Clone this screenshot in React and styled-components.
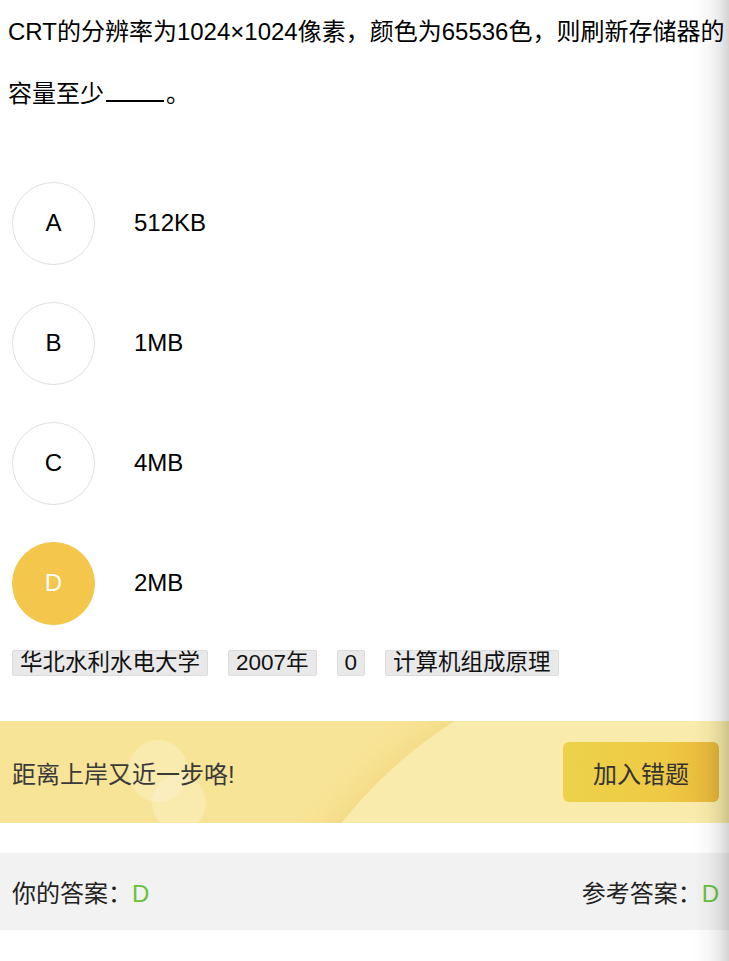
import React from "react";
import styled, { createGlobalStyle } from "styled-components";

const Global = createGlobalStyle`
  html, body { margin: 0; padding: 0; background: #fff; }
  body {
    font-family: "Liberation Sans", Arial, "Noto Sans CJK SC", sans-serif;
    color: #000;
  }
  * { box-sizing: border-box; }
`;

const Page = styled.div`
  position: relative;
  width: 729px;
  min-height: 961px;
  overflow: hidden;
`;

const Question = styled.p`
  margin: 0;
  padding: 1px 0 0 8px;
  font-size: 24px;
  line-height: 62px;
  color: #000;
`;

const Blank = styled.span`
  display: inline-block;
  width: 58px;
  height: 18px;
  border-bottom: 2px solid #000;
  vertical-align: 0px;
  margin: 0 2px 0 2px;
`;

const OptionList = styled.div`
  margin-top: 38px;
  display: flex;
  flex-direction: column;
`;

const OptionRow = styled.div`
  height: 120px;
  display: flex;
  align-items: center;
  padding-left: 12px;
  gap: 39px;
`;

const Circle = styled.div`
  width: 83px;
  height: 83px;
  border-radius: 50%;
  display: flex;
  align-items: center;
  justify-content: center;
  font-size: 24px;
  border: 1px solid ${(p) => (p.$active ? "#F4C64B" : "#e0e0e0")};
  background: ${(p) => (p.$active ? "#F4C64B" : "#fff")};
  color: ${(p) => (p.$active ? "#fff" : "#000")};
`;

const OptionText = styled.span`
  font-size: 24px;
  color: #000;
`;

const Tags = styled.div`
  margin-top: 7px;
  height: 26px;
  padding-left: 12px;
  display: flex;
  align-items: flex-start;
  gap: 20px;
`;

const Tag = styled.span`
  height: 26px;
  padding: 0 7px;
  display: inline-flex;
  align-items: center;
  font-size: 22.5px;
  line-height: 24px;
  color: #111;
  background: #e9e9e9;
  border: 1px solid #dcdcdc;
  border-radius: 2px;
`;

const Banner = styled.div`
  position: relative;
  margin-top: 45px;
  height: 102px;
  display: flex;
  align-items: center;
  justify-content: space-between;
  padding: 0 10px 0 12px;
  background: #F8E497;
  overflow: hidden;
`;

const Arc = styled.div`
  position: absolute;
  left: 241px;
  top: -73px;
  width: 926px;
  height: 926px;
  border-radius: 50%;
  background: #F9EBAB;
  box-shadow: -14px 0 26px rgba(238, 208, 110, 0.45);
`;

const Bubble = styled.div`
  position: absolute;
  border-radius: 50%;
  background: rgba(255, 255, 255, 0.22);
`;

const BannerText = styled.span`
  position: relative;
  font-size: 24px;
  color: #3a3a3a;
`;

const AddButton = styled.button`
  position: relative;
  width: 156px;
  height: 60px;
  border: none;
  border-radius: 6px;
  font-family: inherit;
  font-size: 24px;
  color: #333;
  background: linear-gradient(90deg, #EDD24B 0%, #EFC944 65%, #E6B63A 100%);
  cursor: pointer;
`;

const AnswerBar = styled.div`
  margin-top: 30px;
  height: 77px;
  background: #f2f2f2;
  display: flex;
  align-items: center;
  justify-content: space-between;
  padding: 0 10px 0 12px;
`;

const AnswerItem = styled.span`
  font-size: 24px;
  color: #222;
`;

const Green = styled.span`
  color: #67C23A;
`;

const EdgeShadow = styled.div`
  position: absolute;
  top: 0;
  right: 0;
  width: 36px;
  height: 100%;
  pointer-events: none;
  background: linear-gradient(
    to right,
    rgba(0, 0, 0, 0) 0%,
    rgba(0, 0, 0, 0.03) 45%,
    rgba(0, 0, 0, 0.09) 75%,
    rgba(0, 0, 0, 0.17) 100%
  );
`;

const options = [
  { key: "A", text: "512KB" },
  { key: "B", text: "1MB" },
  { key: "C", text: "4MB" },
  { key: "D", text: "2MB", active: true },
];

const tags = ["华北水利水电大学", "2007年", "0", "计算机组成原理"];

export default function App() {
  return (
    <Page lang="zh-CN">
      <Global />
      <Question>
        CRT的分辨率为1024×1024像素，颜色为65536色，则刷新存储器的容量至少
        <Blank />
        。
      </Question>
      <OptionList>
        {options.map((o) => (
          <OptionRow key={o.key}>
            <Circle $active={o.active}>{o.key}</Circle>
            <OptionText>{o.text}</OptionText>
          </OptionRow>
        ))}
      </OptionList>
      <Tags>
        {tags.map((t) => (
          <Tag key={t}>{t}</Tag>
        ))}
      </Tags>
      <Banner>
        <Arc />
        <Bubble style={{ left: 128, top: 19, width: 60, height: 62 }} />
        <Bubble style={{ left: 152, top: 54, width: 54, height: 56 }} />
        <BannerText>距离上岸又近一步咯!</BannerText>
        <AddButton>加入错题</AddButton>
      </Banner>
      <AnswerBar>
        <AnswerItem>
          你的答案：<Green>D</Green>
        </AnswerItem>
        <AnswerItem>
          参考答案：<Green>D</Green>
        </AnswerItem>
      </AnswerBar>
      <EdgeShadow />
    </Page>
  );
}
